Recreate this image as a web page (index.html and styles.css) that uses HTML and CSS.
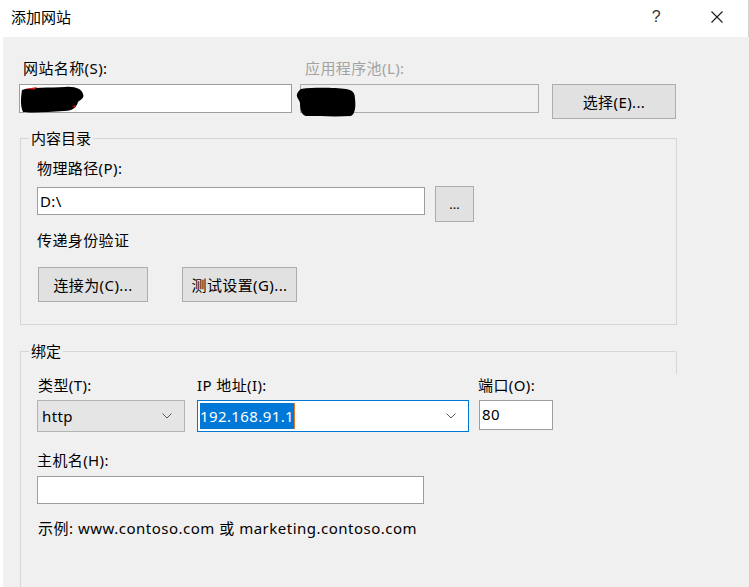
FILE: index.html
```html
<!DOCTYPE html>
<html lang="zh-CN">
<head>
<meta charset="utf-8">
<title>添加网站</title>
<link rel="stylesheet" href="styles.css">
</head>
<body>
<div class="dialog">
  <div class="titlebar">
    <span class="title">添加网站</span>
    <span class="help">?</span>
    <span class="close">
      <svg width="12" height="12" viewBox="0 0 12 12"><path d="M0.5 0.5 L11.5 11.5 M11.5 0.5 L0.5 11.5" stroke="#1a1a1a" stroke-width="1.1" fill="none"/></svg>
    </span>
  </div>
  <div class="client">
    <div class="top-row">
      <div class="field site-field">
        <div class="label top-label">网站名称(S):</div>
        <div class="textbox site-box">
          <svg class="blob site-blob" width="66" height="28" viewBox="0 0 66 28">
            <path d="M2 4 C10 1 30 2 45 1 C55 0 62 3 63 8 C65 12 60 14 58 16 C57 20 54 25 44 25 C30 26 12 27 3 26 C0 20 1 10 2 4 Z" fill="#000"/>
            <path d="M5 3 L17 1 L15 3.5 Z" fill="#d81818"/>
            <path d="M52 20 L56 19 L55 22 Z" fill="#c01010"/>
          </svg>
        </div>
      </div>
      <div class="field pool-field">
        <div class="label top-label disabled">应用程序池(L):</div>
        <div class="textbox pool-box">
          <svg class="blob pool-blob" width="60" height="30" viewBox="0 0 60 30">
            <path d="M5 2 C20 0 40 1 50 2 C57 3 59 6 59 12 C60 20 59 27 55 29 C40 30 22 29 10 29 C6 28 4 24 4 16 C3 12 0 10 1 7 C2 5 3 3 5 2 Z" fill="#000"/>
          </svg>
        </div>
      </div>
      <button class="btn select-btn">选择(E)...</button>
    </div>

    <fieldset class="group content-group">
      <legend>内容目录</legend>
      <div class="label">物理路径(P):</div>
      <div class="path-row">
        <div class="textbox path-box">D:\</div>
        <button class="btn browse-btn">...</button>
      </div>
      <div class="label pass-label">传递身份验证</div>
      <div class="btn-row">
        <button class="btn connect-btn">连接为(C)...</button>
        <button class="btn test-btn">测试设置(G)...</button>
      </div>
    </fieldset>

    <fieldset class="group binding-group">
      <legend>绑定</legend>
      <div class="bind-row">
        <div class="field type-field">
          <div class="label">类型(T):</div>
          <div class="combo type-combo">
            <span class="combo-text">http</span>
            <svg class="chev" width="10" height="6" viewBox="0 0 10 6"><path d="M0.5 0.5 L5 5 L9.5 0.5" stroke="#5a5a5a" stroke-width="1" fill="none"/></svg>
          </div>
        </div>
        <div class="field ip-field">
          <div class="label">IP 地址(I):</div>
          <div class="combo ip-combo">
            <span class="combo-text selected">192.168.91.1</span>
            <svg class="chev" width="10" height="6" viewBox="0 0 10 6"><path d="M0.5 0.5 L5 5 L9.5 0.5" stroke="#5a5a5a" stroke-width="1" fill="none"/></svg>
          </div>
        </div>
        <div class="field port-field">
          <div class="label">端口(O):</div>
          <div class="textbox port-box">80</div>
        </div>
      </div>
      <div class="label host-label">主机名(H):</div>
      <div class="textbox host-box"></div>
      <div class="hint">示例: www.contoso.com 或 marketing.contoso.com</div>
    </fieldset>
  </div>
</div>
</body>
</html>
```
FILE: styles.css
```css
* { box-sizing: border-box; }
html, body { margin: 0; padding: 0; }
body {
  width: 749px;
  height: 587px;
  overflow: hidden;
  background: #fff;
  font-family: "Noto Sans", "Noto Sans CJK SC", sans-serif;
  font-size: 15px;
  letter-spacing: 0.4px;
  color: #000;
}
.dialog {
  display: flex;
  flex-direction: column;
  height: 587px;
}
.titlebar {
  height: 37px;
  flex: none;
  display: flex;
  align-items: center;
  padding: 0 0 3px 11px;
  background: #fff;
  border-right: 1px solid #d4d4d4;
}
.title {
  flex: 1;
  font-size: 15px;
  line-height: 20px;
  letter-spacing: 0;
}
.help {
  font-family: "Liberation Sans", sans-serif;
  font-size: 16px;
  line-height: 20px;
  color: #333;
  margin-right: 50px;
}
.close {
  display: flex;
  width: 12px;
  height: 12px;
  margin-right: 25px;
}
.client {
  flex: 1;
  margin-left: 3px;
  background: #f0f0f0;
  padding: 21px 0 0 16px;
  overflow: hidden;
  display: flex;
  flex-direction: column;
}
.label {
  line-height: 20px;
  white-space: nowrap;
}
.label.disabled { color: #a3a3a3; }
.top-row {
  display: flex;
  align-items: flex-start;
}
.field { display: flex; flex-direction: column; }
.top-label { margin-bottom: 6px; }
.site-field .top-label { padding-left: 4px; }
.pool-field { margin-left: 8px; }
.pool-field .top-label { padding-left: 5px; }
.textbox {
  height: 29px;
  background: #fff;
  border: 1px solid #9d9d9d;
  line-height: 26px;
  padding-left: 2px;
  white-space: nowrap;
}
.site-box { width: 273px; padding-left: 0; }
.pool-box { width: 239px; background: #f0f0f0; border-color: #ababab; padding-left: 0; }
.blob { display: block; }
.site-blob { margin-top: 1px; }
.pool-blob { margin: 2px 0 0 -5px; }
.btn {
  font: inherit;
  letter-spacing: inherit;
  color: #000;
  background: #e1e1e1;
  border: 1px solid #adadad;
  padding: 0;
  height: 35px;
  line-height: 20px;
  text-align: center;
}
.select-btn {
  width: 124px;
  margin: 26px 0 0 13px;
}

.group {
  margin: 0 0 0 1px;
  min-inline-size: 0;
  width: 657px;
  border: 1px solid #d6d6d6;
  padding: 0 0 0 16px;
}
.group legend {
  font-size: 15px;
  line-height: 18px;
  padding: 0 2px;
  margin-left: -8px;
  letter-spacing: 0;
}
.content-group {
  margin-top: 10px;
  padding-top: 11px;
  padding-bottom: 22px;
}
.path-row {
  display: flex;
  align-items: flex-start;
  margin-top: 8px;
}
.path-box {
  width: 388px;
  height: 28px;
  margin-top: 1px;
}
.browse-btn {
  width: 39px;
  height: 36px;
  margin-left: 10px;
  font-size: 13px;
  letter-spacing: 0;
}
.pass-label { margin-top: 8px; }
.btn-row {
  display: flex;
  margin: 17px 0 0 1px;
  gap: 34px;
}
.connect-btn { width: 110px; }
.test-btn { width: 115px; }

.binding-group {
  margin-top: 17px;
  padding-top: 15px;
  padding-bottom: 200px;
  border-right-color: transparent;
  background: linear-gradient(#d6d6d6, #d6d6d6) no-repeat right top / 1px 23px;
  background-origin: border-box;
  flex: none;
}
.bind-row {
  display: flex;
  align-items: flex-start;
}
.bind-row .label { margin-bottom: 5px; }
.type-field .label { padding-left: 1px; }
.ip-field { margin-left: 12px; }
.port-field { margin-left: 10px; }
.port-field .label { margin-left: -1px; }
.combo {
  height: 32px;
  display: flex;
  align-items: center;
  justify-content: space-between;
  border: 1px solid #b4b4b4;
  padding: 0 12px 0 3px;
}
.type-combo {
  width: 148px;
  background: #e5e5e5;
  padding-left: 4px;
}
.ip-combo {
  width: 272px;
  background: #fff;
  border-color: #0078d7;
  padding-left: 2px;
}
.combo-text { line-height: 20px; }
.combo-text.selected {
  background: #0078d7;
  color: #fff;
  line-height: 26px;
  padding-right: 0;
  border-right: 1px solid #e07a2a;
}
.chev { display: block; flex: none; }
.port-box {
  width: 74px;
  height: 30px;
  line-height: 27px;
}
.host-label { margin-top: 18px; }
.host-box {
  width: 387px;
  height: 28px;
  margin-top: 6px;
}
.hint {
  margin-top: 14px;
  line-height: 20px;
  padding-left: 1px;
  letter-spacing: 0.5px;
  white-space: nowrap;
}
```
